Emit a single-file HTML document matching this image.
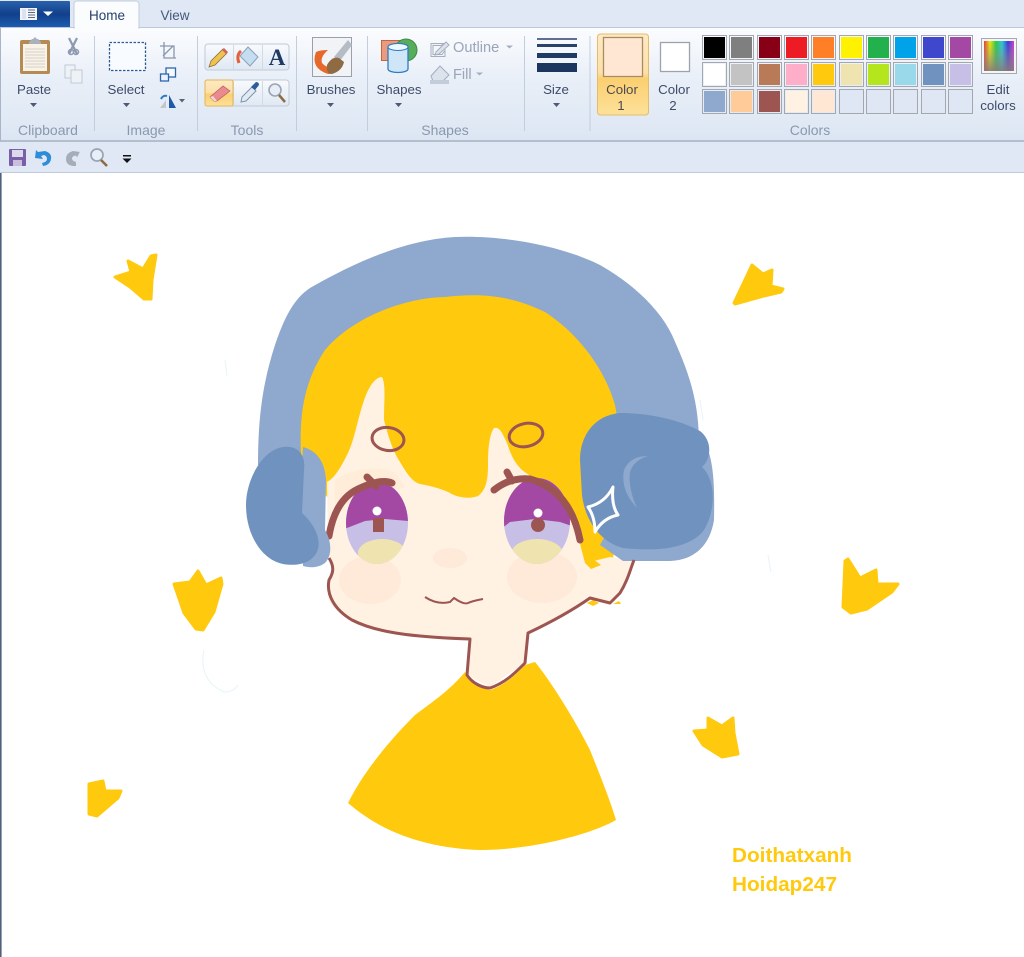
<!DOCTYPE html>
<html><head><meta charset="utf-8"><style>
html,body{margin:0;padding:0;background:#fff}
svg{display:block;filter:blur(.35px)}
text{font-family:"Liberation Sans",sans-serif;font-size:13.3px;fill:#3d4c69}
.g{fill:#8b98ad;text-anchor:middle;font-size:14px}
.m{text-anchor:middle}
.d{fill:#9aa5b8;font-size:14.6px}
</style></head><body>
<svg width="1024" height="957" viewBox="0 0 1024 957" xmlns="http://www.w3.org/2000/svg">
<defs>
<linearGradient id="rb" x1="0" y1="0" x2="0" y2="1"><stop offset="0" stop-color="#fbfcfe"/><stop offset=".45" stop-color="#e9eff8"/><stop offset="1" stop-color="#dce6f3"/></linearGradient>
<linearGradient id="app" x1="0" y1="0" x2="0" y2="1"><stop offset="0" stop-color="#2a62ae"/><stop offset=".5" stop-color="#12408a"/><stop offset="1" stop-color="#1d5cb0"/></linearGradient>
<linearGradient id="sel" x1="0" y1="0" x2="0" y2="1"><stop offset="0" stop-color="#fde9c4"/><stop offset=".48" stop-color="#fde0a8"/><stop offset=".55" stop-color="#fbcf70"/><stop offset="1" stop-color="#fde19a"/></linearGradient>
<linearGradient id="tb" x1="0" y1="0" x2="0" y2="1"><stop offset="0" stop-color="#f8fafd"/><stop offset="1" stop-color="#dfe8f3"/></linearGradient>
<linearGradient id="rain" x1="0" y1="0" x2="1" y2="0"><stop offset="0" stop-color="#e33"/><stop offset=".2" stop-color="#ee0"/><stop offset=".4" stop-color="#2c4"/><stop offset=".6" stop-color="#2cd"/><stop offset=".8" stop-color="#33d"/><stop offset="1" stop-color="#d3c"/></linearGradient>
<linearGradient id="rainv" x1="0" y1="0" x2="0" y2="1"><stop offset="0" stop-color="#999" stop-opacity=".05"/><stop offset="1" stop-color="#8a7a7a" stop-opacity=".9"/></linearGradient>
<clipPath id="le"><ellipse cx="377" cy="523" rx="31" ry="41"/></clipPath>
<clipPath id="re"><ellipse cx="537" cy="521" rx="33" ry="43"/></clipPath>
</defs>

<!-- chrome -->
<rect width="1024" height="173" fill="#dfe8f4"/>
<rect x="0" y="28" width="1024" height="113" fill="url(#rb)"/>
<line x1="0" y1="27.500" x2="1024" y2="27.500" stroke="#bcc8d8"/>
<line x1="0" y1="141" x2="1024" y2="141" stroke="#b3bfcf" stroke-width="2"/>
<line x1="0" y1="172.500" x2="1024" y2="172.500" stroke="#c0cad8"/>
<rect x="0" y="173" width="1.600" height="784" fill="#51617c"/>
<rect x="0" y="28" width="1" height="113" fill="#a8b5c8"/>

<!-- app button & tabs -->
<path d="M0 1H69a1 1 0 0 1 1 1V27H0Z" fill="url(#app)"/>
<rect x="20" y="8" width="17" height="12" fill="#f3f5fa"/>
<path d="M28 10h7M28 12.500h7M28 15h7M28 17.500h7" stroke="#5c6b85"/><rect x="22" y="9" width="4" height="10" fill="#dbe2ef"/>
<path d="M43 11.500h10l-5 4.500z" fill="#fff"/>
<path d="M74 28V4a3 3 0 0 1 3-3H136a3 3 0 0 1 3 3V28Z" fill="#fbfcfe" stroke="#c3cedc"/>
<rect x="75" y="26" width="63" height="4" fill="#fbfcfe"/>
<text x="107" y="20" class="m" style="fill:#27406e;font-size:13.500px">Home</text>
<text x="175" y="20" class="m" style="fill:#44597c;font-size:13.500px">View</text>

<!-- separators -->
<g stroke="#c3cedd">
<line x1="94.500" y1="36" x2="94.500" y2="131"/><line x1="197.500" y1="36" x2="197.500" y2="131"/><line x1="296.500" y1="36" x2="296.500" y2="131"/><line x1="367.500" y1="36" x2="367.500" y2="131"/><line x1="524.500" y1="36" x2="524.500" y2="131"/><line x1="590" y1="36" x2="590" y2="131"/>
</g>

<!-- Clipboard -->
<rect x="20" y="40" width="30" height="34" rx="2" fill="#b58b55"/><rect x="23" y="44" width="24" height="27" fill="#f8f3e6"/>
<path d="M25 49h20M25 52h20M25 55h20M25 58h20M25 61h20M25 64h20M25 67h20" stroke="#d3d2cf"/>
<path d="M29 42l3-3h1l2-2 2 2h1l3 3v2H29Z" fill="#aab0bc"/>
<path d="M69 38l8 16M77 38l-8 16" stroke="#8c99ae" stroke-width="2.200" fill="none"/><circle cx="71" cy="52" r="2.500" fill="none" stroke="#8c99ae" stroke-width="1.500"/><circle cx="76" cy="52" r="2.500" fill="none" stroke="#8c99ae" stroke-width="1.500"/>
<rect x="65" y="65" width="10" height="13" fill="#eef1f6" stroke="#c1c9d5"/><rect x="71" y="70" width="11" height="13" fill="#eef1f6" stroke="#c1c9d5"/>
<text x="34" y="94" class="m">Paste</text>
<path d="M30 103h7l-3.500 4z" fill="#4e5b72"/>
<text x="48" y="135" class="g">Clipboard</text>

<!-- Image -->
<rect x="109.500" y="42.500" width="36" height="28" fill="#f8fbff" stroke="#2d5c92" stroke-width="1.300" stroke-dasharray="2.500 1.500"/>
<path d="M160 46h14v12M164 42v16h12M163 56l10-10" fill="none" stroke="#8a97ac" stroke-width="1.300"/>
<rect x="166" y="68" width="9.500" height="9" fill="#f6f9fd" stroke="#2d66ad" stroke-width="1.300"/><rect x="160.500" y="74" width="8" height="7" fill="#eaf1fa" stroke="#2d66ad" stroke-width="1.300"/>
<path d="M169 108V95l7 13Z" fill="#1f5aa8"/><path d="M160 108l6-8v8Z" fill="#c3c7cd"/><path d="M161 99q2-4 6-3" fill="none" stroke="#2d79c2" stroke-width="2"/>
<path d="M179 99h6l-3 3.500z" fill="#55627a"/>
<text x="126" y="94" class="m">Select</text>
<path d="M123 103h7l-3.500 4z" fill="#4e5b72"/>
<text x="146" y="135" class="g">Image</text>

<!-- Tools -->
<rect x="205" y="44" width="84" height="26" rx="3" fill="url(#tb)" stroke="#c0cad8"/>
<rect x="205" y="80" width="84" height="26" rx="3" fill="url(#tb)" stroke="#c0cad8"/>
<path d="M233.500 45v24M262.500 45v24M233.500 81v24M262.500 81v24" stroke="#d0d9e5"/>
<path d="M209 67l2-6 12-12 4 4-12 12Z" fill="#f0c350" stroke="#8d6e3a" stroke-width=".8"/><path d="M222 50l2-2 4 4-2 2Z" fill="#d2675f"/>
<path d="M248 47l10 10-8 9-10-10Z" fill="#c5ddf0" stroke="#8ca2b9"/><path d="M241 51q-5 4-2 12" fill="none" stroke="#e2603a" stroke-width="3"/>
<text x="277" y="65" class="m" style="font-family:'Liberation Serif',serif;font-weight:bold;font-size:23px;fill:#1f3a63">A</text>
<rect x="205" y="80" width="28" height="26" rx="2" fill="url(#sel)" stroke="#e3b554"/>
<path d="M210 97l13-11 7 5-13 10h-3Z" fill="#ea8a8e" stroke="#b45e62" stroke-width=".7"/><path d="M210 97l4 4h3l-4-5Z" fill="#f2d6d0"/>
<path d="M241 102l1-5 10-10 4 4-10 10Z" fill="#dfeaf5" stroke="#8294aa"/><path d="M251 87l5-5q3 0 3 3l-4 5Z" fill="#2a5d99"/>
<circle cx="275" cy="90" r="6" fill="#e7eef7" stroke="#9aa5b3" stroke-width="1.600"/><path d="M279 95l6 7" stroke="#8d6b45" stroke-width="2.500"/>
<text x="247" y="135" class="g">Tools</text>

<!-- Brushes -->
<rect x="312.500" y="37.500" width="39" height="39" fill="#f1f3f6" stroke="#9aa0a8"/>
<path d="M348 40l-14 17 5 5 13-17Z" fill="#b5bcc6"/>
<path d="M316 52q-6 16 12 22 8 0 10-8-10 4-16-3-2-6 6-13-8 0-12 2Z" fill="#e7682b"/>
<path d="M327 65q5-9 12-7l5 4q-2 9-12 12-6 0-5-9Z" fill="#8f6b44"/>
<text x="331" y="94" class="m">Brushes</text>
<path d="M327 103h7l-3.500 4z" fill="#4e5b72"/>

<!-- Shapes -->
<rect x="381.500" y="40.500" width="21" height="20" fill="#ea9a7d" stroke="#c5653f"/>
<circle cx="406" cy="50" r="11" fill="#56ad5a" stroke="#3d8c42"/>
<path d="M388 47a10 3.500 0 0 1 20 0V69a10 3.500 0 0 1-20 0Z" fill="#cfe6f8" stroke="#2d7cc4" stroke-width="1.300"/><ellipse cx="398" cy="47" rx="10" ry="3.500" fill="#eef7fd" stroke="#2d7cc4"/>
<text x="399" y="94" class="m">Shapes</text>
<path d="M395 103h7l-3.500 4z" fill="#4e5b72"/>
<path d="M431 43.500h13l-3 2h-8v9h9l3-4v6h-14Z" fill="#f1f4f8" stroke="#a4aebd"/><path d="M436 52l10-10 3 3-10 9-4 1Z" fill="#dce3ec" stroke="#a4aebd"/>
<text x="453" y="52" class="d">Outline</text><path d="M506 45.500h7l-3.500 3z" fill="#a5afbf"/>
<path d="M431 76l9-10 9 9-6 6h-10Z" fill="#dce3ec" stroke="#a4aebd"/><rect x="430" y="80" width="19" height="4" fill="#c3ccd9"/>
<text x="453" y="79" class="d">Fill</text><path d="M476 72.500h7l-3.500 3z" fill="#a5afbf"/>
<text x="445" y="135" class="g">Shapes</text>

<!-- Size -->
<rect x="537" y="38" width="40" height="2" fill="#5d7091"/><rect x="537" y="44" width="40" height="3" fill="#2a4168"/><rect x="537" y="53" width="40" height="5" fill="#1f3a63"/><rect x="537" y="63" width="40" height="9" fill="#1c365f"/>
<text x="556" y="94" class="m">Size</text>
<path d="M553 103h7l-3.500 4z" fill="#4e5b72"/>

<!-- Colour 1/2 -->
<rect x="597.500" y="34" width="51" height="81" rx="3" fill="url(#sel)" stroke="#e5bc6b"/>
<rect x="603.500" y="37.500" width="39" height="39" fill="#ffe7d4" stroke="#a88d63" stroke-width="1.300"/>
<text x="622" y="94" class="m" style="fill:#4a4a50">Color</text><text x="621" y="110" class="m" style="fill:#4a4a50">1</text>
<rect x="660.500" y="42.500" width="29" height="29" fill="#fff" stroke="#9ca3ad" stroke-width="1.300"/>
<text x="674" y="94" class="m">Color</text><text x="673" y="110" class="m">2</text>

<!-- Palette -->
<g stroke="#a4a7ad" fill="none">
<rect x="702.500" y="35.500" width="24" height="24"/><rect x="729.500" y="35.500" width="24" height="24"/><rect x="757.500" y="35.500" width="24" height="24"/><rect x="784.500" y="35.500" width="24" height="24"/><rect x="811.500" y="35.500" width="24" height="24"/><rect x="839.500" y="35.500" width="24" height="24"/><rect x="866.500" y="35.500" width="24" height="24"/><rect x="893.500" y="35.500" width="24" height="24"/><rect x="921.500" y="35.500" width="24" height="24"/><rect x="948.500" y="35.500" width="24" height="24"/>
<rect x="702.500" y="62.500" width="24" height="24"/><rect x="729.500" y="62.500" width="24" height="24"/><rect x="757.500" y="62.500" width="24" height="24"/><rect x="784.500" y="62.500" width="24" height="24"/><rect x="811.500" y="62.500" width="24" height="24"/><rect x="839.500" y="62.500" width="24" height="24"/><rect x="866.500" y="62.500" width="24" height="24"/><rect x="893.500" y="62.500" width="24" height="24"/><rect x="921.500" y="62.500" width="24" height="24"/><rect x="948.500" y="62.500" width="24" height="24"/>
<rect x="702.500" y="89.500" width="24" height="24"/><rect x="729.500" y="89.500" width="24" height="24"/><rect x="757.500" y="89.500" width="24" height="24"/><rect x="784.500" y="89.500" width="24" height="24"/><rect x="811.500" y="89.500" width="24" height="24"/><rect x="839.500" y="89.500" width="24" height="24" fill="#dfe7f4"/><rect x="866.500" y="89.500" width="24" height="24" fill="#dfe7f4"/><rect x="893.500" y="89.500" width="24" height="24" fill="#dfe7f4"/><rect x="921.500" y="89.500" width="24" height="24" fill="#dfe7f4"/><rect x="948.500" y="89.500" width="24" height="24" fill="#dfe7f4"/>
</g>
<g>
<rect x="704" y="37" width="21" height="21" fill="#000"/><rect x="731" y="37" width="21" height="21" fill="#7f7f7f"/><rect x="759" y="37" width="21" height="21" fill="#880015"/><rect x="786" y="37" width="21" height="21" fill="#ed1c24"/><rect x="813" y="37" width="21" height="21" fill="#ff7f27"/><rect x="841" y="37" width="21" height="21" fill="#fff200"/><rect x="868" y="37" width="21" height="21" fill="#22b14c"/><rect x="895" y="37" width="21" height="21" fill="#00a2e8"/><rect x="923" y="37" width="21" height="21" fill="#3f48cc"/><rect x="950" y="37" width="21" height="21" fill="#a349a4"/>
<rect x="704" y="64" width="21" height="21" fill="#fff"/><rect x="731" y="64" width="21" height="21" fill="#c3c3c3"/><rect x="759" y="64" width="21" height="21" fill="#b97a57"/><rect x="786" y="64" width="21" height="21" fill="#ffaec9"/><rect x="813" y="64" width="21" height="21" fill="#ffc90e"/><rect x="841" y="64" width="21" height="21" fill="#efe4b0"/><rect x="868" y="64" width="21" height="21" fill="#b5e61d"/><rect x="895" y="64" width="21" height="21" fill="#99d9ea"/><rect x="923" y="64" width="21" height="21" fill="#7092be"/><rect x="950" y="64" width="21" height="21" fill="#c8bfe7"/>
<rect x="704" y="91" width="21" height="21" fill="#8fa8cd"/><rect x="731" y="91" width="21" height="21" fill="#ffcc99"/><rect x="759" y="91" width="21" height="21" fill="#9d5552"/><rect x="786" y="91" width="21" height="21" fill="#fff2e2"/><rect x="813" y="91" width="21" height="21" fill="#ffe7d4"/>
</g>
<text x="810" y="135" class="g">Colors</text>
<rect x="981.500" y="38.500" width="35" height="35" fill="#f4f5f8" stroke="#a6a9b0"/>
<rect x="984" y="41" width="30" height="30" fill="url(#rain)"/><rect x="984" y="41" width="30" height="30" fill="url(#rainv)"/>
<text x="998" y="94" class="m">Edit</text><text x="998" y="110" class="m">colors</text>

<!-- QAT -->
<rect x="9" y="149" width="17" height="17" rx="1" fill="#7b5ea8"/><rect x="12" y="150" width="11" height="7" fill="#dcd9ea"/><rect x="13" y="160" width="9" height="6" fill="#c9bfdc"/>
<path d="M38 152l7-1q7 2 6 8t-8 7l-1-3q5-1 5-4t-3-4l-3 1 2 3-8-1 1-8Z" fill="#2d8dd6"/>
<path d="M80 152l-7-1q-7 2-7 8t7 7h3v-4q-4-1-4-3.500t4-3l1 2 3-6Z" fill="#a5adb9"/>
<circle cx="97" cy="155" r="6" fill="#e8eff8" stroke="#9aa5b3" stroke-width="1.700"/><path d="M101 160l6 6" stroke="#8d6b45" stroke-width="2.600"/>
<path d="M123 155h8v1.500h-8Z" fill="#111"/><path d="M122.500 158.500h9l-4.500 4.500z" fill="#111"/>

<!-- drawing -->
<g>
<g fill="none" stroke="#e6f4f9">
<path d="M204 650q-6 30 20 42 10 0 14-7"/><path d="M225 360l2 16M768 555l3 17M700 400l3 20"/>
</g>
<!-- headband -->
<path d="M258 465C258 420 262 385 275 345 285 315 295 298 310 288 345 268 400 240 455 237 500 235 560 245 600 265 635 285 660 310 672 335 690 375 698 400 699 440L699 480 320 480Z" fill="#8fa8cd"/>
<!-- hair -->
<path d="M302 470C298 420 302 385 325 350 350 320 400 298 445 297 480 293 510 295 545 312 580 335 605 370 615 405 622 440 622 500 612 566L585 565 330 500Z" fill="#ffc90e"/>
<!-- face -->
<path d="M327 482C335 478 342 465 347 455 355 440 358 415 366 395 370 385 376 377 382 377 386 385 384 400 384 420 388 435 392 450 400 462 406 472 412 482 420 484 430 486 440 488 450 493 458 498 470 499 478 496 486 490 488 480 488 465 488 450 489 435 494 428 500 426 503 435 507 443 511 455 514 462 522 470 532 478 545 483 555 493 568 505 575 520 579 540L585 563 610 557 633 560C630 575 625 585 618 595L610 602 590 598C575 610 550 622 528 633L525 663 490 687 467 675 470 638C430 638 390 634 357 623 340 615 330 606 328 597L328 580 333 567 328 550Z" fill="#fff2e2"/>
<path d="M585 563l8-4 8 6-10 4Z" fill="#ffc90e"/><path d="M587 603l6-3 6 3-6 3ZM613 604l6-3 2 3Z" fill="#ffc90e"/>
<!-- cheeks nose -->
<ellipse cx="370" cy="580" rx="31" ry="24" fill="#ffe9d9"/><ellipse cx="542" cy="577" rx="35" ry="26" fill="#ffe9d9"/><ellipse cx="450" cy="558" rx="17" ry="10" fill="#ffe9d9"/>
<path d="M335 480q30-18 60-8l10 15-70 20Z" fill="#ffe7d4" opacity=".6"/>
<!-- eyes -->
<g clip-path="url(#le)"><rect x="340" y="480" width="80" height="90" fill="#c8bfe7"/><path d="M340 480H420V522L385 519 365 521 342 530Z" fill="#a349a4"/><ellipse cx="382" cy="553" rx="24" ry="14" fill="#efe4b0"/></g>
<g clip-path="url(#re)"><rect x="500" y="475" width="80" height="95" fill="#c8bfe7"/><path d="M500 475H575V527L560 522 535 519 510 522 500 530Z" fill="#a349a4"/><ellipse cx="537" cy="554" rx="26" ry="15" fill="#efe4b0"/></g>
<rect x="373" y="518" width="11" height="14" fill="#9d5552"/><circle cx="538" cy="525" r="7" fill="#9d5552"/>
<circle cx="377" cy="511" r="4.500" fill="#fff"/><circle cx="538" cy="513" r="4.500" fill="#fff"/>
<!-- brows -->
<g fill="none" stroke="#9d5552" stroke-width="7" stroke-linecap="round" stroke-linejoin="round">
<path d="M329 536Q335 500 358 489T392 483M367 477l9 9"/>
<path d="M494 490Q510 477 530 479 570 490 580 540M507 472l5 9"/>
</g>
<!-- hair ovals -->
<ellipse cx="388" cy="439" rx="16" ry="11.500" transform="rotate(8 388 439)" fill="none" stroke="#9d5552" stroke-width="3"/>
<ellipse cx="526" cy="435" rx="17" ry="11.500" transform="rotate(-12 526 435)" fill="none" stroke="#9d5552" stroke-width="3"/>
<!-- mouth -->
<path d="M425 597q12 8 25 5l4-4q10 7 14 5t15-4" fill="none" stroke="#9d5552" stroke-width="2"/>
<!-- ear cups -->
<path d="M303 447C315 450 325 460 326 480L325 530C331 540 333 555 325 563 318 568 310 568 303 566L300 500Z" fill="#8fa8cd"/>
<path d="M246 505C246 480 262 450 283 447 298 445 306 455 304 470L302 513C315 525 322 540 317 552 310 565 295 566 283 564 262 560 246 535 246 505Z" fill="#7092be"/>
<path d="M697 428C712 450 715 470 714 520 710 545 695 560 670 561L623 561 600 545 660 440Z" fill="#8fa8cd"/>
<path d="M580 460C580 435 595 415 620 413 650 413 680 420 700 431 712 440 712 458 702 467 716 480 716 510 704 530 690 548 660 552 623 548 600 542 585 520 582 495Z" fill="#7092be"/>
<path d="M648 456Q630 456 624 470 620 490 637 508 628 488 630 472 634 460 648 456Z" fill="#8fa8cd"/>
<path d="M613 487Q611 505 618 515 603 518 595 532 595 517 588 507 605 503 613 487Z" fill="none" stroke="#fff" stroke-width="3" stroke-linejoin="round"/>
<!-- shirt -->
<path d="M465 672C470 680 480 688 490 690 505 685 515 675 525 665L535 662C550 680 575 720 590 750 600 775 610 800 616 820 590 835 530 850 480 850 430 848 385 835 348 803 362 775 385 745 415 715 435 700 450 690 465 672Z" fill="#ffc90e"/>
<!-- outline -->
<path d="M329 558C334 566 334 572 329 580 326 595 335 610 352 620 375 632 410 637 470 639L467 675C472 683 482 688 490 688 505 683 515 673 525 663L528 633C545 625 570 612 590 598L610 603 620 593C628 580 630 570 634 560" fill="none" stroke="#9d5552" stroke-width="3" stroke-linejoin="round"/>
<!-- little stars -->
<g fill="#ffc90e" stroke="#ffc90e" stroke-width="3" stroke-linejoin="round">
<path d="M115 277L131 272 128 261 143 269 151 256 156 255 152 280 151 299 144 299 130 287Z"/>
<path d="M174 584L190 582 198 571 206 585 221 578 222 584 214 612 203 630 196 629 184 613Z"/>
<path d="M734 303L752 265 763 274 772 270 771 286 783 289 781 292 760 297 735 304Z"/>
<path d="M843 607L845 561 848 559 860 578 876 570 877 584 898 584 892 592 867 609 851 613Z"/>
<path d="M694 731L708 730 708 718 722 726 733 718 734 733 738 754 722 757 703 745Z"/>
<path d="M89 784L103 781 105 791 121 791 118 798 97 816 89 814Z"/>
</g>
<text x="732" y="862" textLength="120" lengthAdjust="spacingAndGlyphs" style="font-size:20px;font-weight:bold;fill:#ffc90e">Doithatxanh</text>
<text x="732" y="891" textLength="105" lengthAdjust="spacingAndGlyphs" style="font-size:20px;font-weight:bold;fill:#ffc90e">Hoidap247</text>
</g>
</svg>
</body></html>
